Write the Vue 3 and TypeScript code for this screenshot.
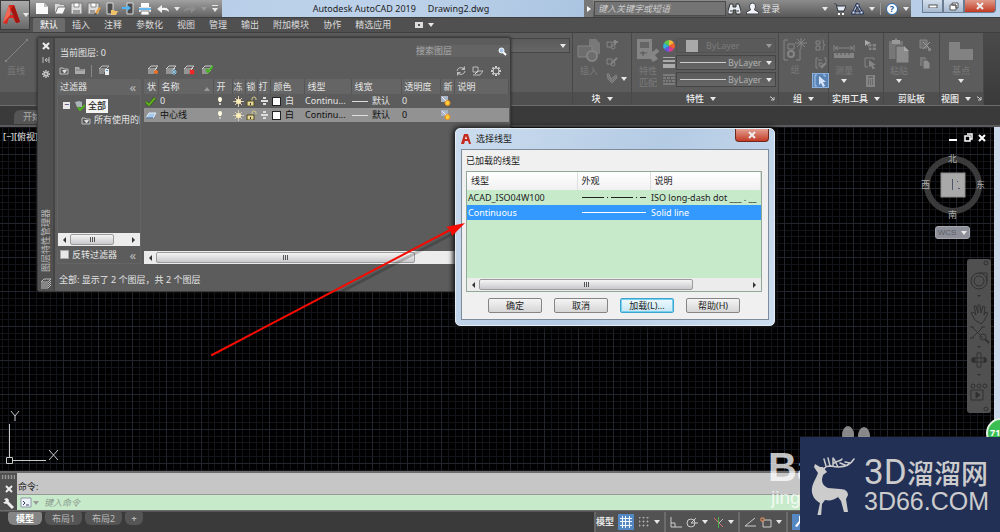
<script setup lang="ts">
import { h, ref } from 'vue'

type Shape = [d: string, fill?: string, stroke?: string, width?: number]
interface GlyphDef { w: number; h: number; shapes: Shape[] }

const ink = '#e8e8e8'
const dim = '#858585'

const glyphs: Record<string, GlyphDef> = {
  new: { w: 14, h: 13, shapes: [['M1 1h8l4 4v7H1z', '#fafafa'], ['M9 1v4h4z', '#bdbdbd']] },
  open: { w: 14, h: 13, shapes: [['M2 12V2h4l1 1h4v2H5z', '#d8d8d8'], ['M5 5h8l-3 7H2z', '#f7f7f7', '#777', 1]] },
  save: { w: 13, h: 13, shapes: [['M1 1h11v11H1z', '#dcdcdc', '#777', 1], ['M4 1h5v4H4z', '#fff', '#888', 1], ['M3 8h7v4H3z', '#9a9a9a']] },
  saveAs: { w: 14, h: 13, shapes: [['M1 1h11v11H1z', '#dcdcdc', '#777', 1], ['M4 1h5v4H4z', '#fff', '#888', 1], ['M3 8h5v4H3z', '#9a9a9a'], ['M8 11l4-6 2 1-4 6z', '#e8a040'], ['M8 11l-1 2 3-1z', '#444']] },
  phoneOpen: { w: 13, h: 13, shapes: [['M2 1h6v11H2z', '#4d4d4d', '#d8d8d8', 1], ['M6 8h3l1 1h3l-2 4H6z', '#f0c36a']] },
  phoneSave: { w: 13, h: 13, shapes: [['M5 1h6v11H5z', '#4d4d4d', '#d8d8d8', 1], ['M0 5h5V3l4 3-4 3V7H0z', '#53b4f4']] },
  print: { w: 14, h: 13, shapes: [['M3 1h8v4H3z', '#fff'], ['M1 5h12v5H1z', '#e3e3e3'], ['M1 6h12v2H1z', '#68b7ee'], ['M3 9h8v4H3z', '#fff', '#888', 1]] },
  undo: { w: 14, h: 10, shapes: [['M1 5l5-4v3c5-1 7 1 7 4-2-2-4-2-7-2v3z', '#f2f2f2']] },
  redo: { w: 14, h: 10, shapes: [['M13 5L8 1v3C3 3 1 5 1 8c2-2 4-2 7-2v3z', '#8d8d8d']] },
  caret: { w: 6, h: 4, shapes: [['M0 0h6L3 4z', ink]] },
  caretDim: { w: 6, h: 4, shapes: [['M0 0h6L3 4z', '#999']] },
  menuCaret: { w: 8, h: 7, shapes: [['M1 0h6v1H1zM1 3h6L4 7z', ink]] },
  play: { w: 4, h: 6, shapes: [['M0 0l4 3-4 3z', '#fff']] },
  binoculars: { w: 13, h: 13, shapes: [['M2 2h3v3h3V2h3l2 7v3H8V8H5v4H0V9z', '#e6ebf2', '#333', 1], ['M2 9h2M9 9h2', 'none', '#333', 1]] },
  person: { w: 13, h: 13, shapes: [['M6.500 1a3 3 0 013 3c0 2-1 3-1 4l4 2v2H.5v-2l4-2c0-1-1-2-1-4a3 3 0 013-3z', '#f4f6fa', '#40464f', 1]] },
  cart: { w: 13, h: 12, shapes: [['M1 1h2l2 7h6l2-5H4', '#e6ebf2', '#2c3440', 1], ['M5 10h2v2H5zM9 10h2v2H9z', '#fff']] },
  triangle: { w: 13, h: 12, shapes: [['M6 2L2 10h9z', 'none', '#2c3a5c', 3], ['M6 2L2 10h9z', 'none', '#e6ecf6', 1], ['M5 1h3v3H5zM1 8h3v3H1zM9 8h3v3H9z', '#e6ecf6', '#2c3a5c', 1]] },
  ribbonBox: { w: 10, h: 6, shapes: [['M1 0h8v6H1z', '#ddd'], ['M4 2h2v2H4z', '#555']] },
  close: { w: 8, h: 8, shapes: [['M1 1l6 6M7 1L1 7', 'none', '#eee', 2]] },
  pin: { w: 8, h: 8, shapes: [['M1 1v6M7 1v6M3 4h4M5 2L3 4l2 2', 'none', '#bbb', 1]] },
  gear: { w: 12, h: 12, shapes: [['M6 1v10M1 6h10M2.500 2.500l7 7M9.500 2.500l-7 7', 'none', '#ccc', 2], ['M3 6a3 3 0 106 0 3 3 0 10-6 0z', '#5c5c5c', '#ccc', 1]] },
  folderFilter: { w: 10, h: 9, shapes: [['M1 2h3l1 1h4v5H1z', 'none', '#bbb', 1], ['M3 4h5L6 7H5z', '#ddd']] },
  folder: { w: 10, h: 9, shapes: [['M0 1h4l1 2h5v5H0z', '#aaa'], ['M1 4h8', 'none', '#777', 1]] },
  states: { w: 12, h: 11, shapes: [['M4 1h7L8 4H1zM1 6h6M1 8h5', 'none', '#bbb', 1], ['M7 4h4v6H7z', '#eee'], ['M8 5h2v1H8z', '#3b8fd0']] },
  layerNew: { w: 12, h: 11, shapes: [['M4 1h7L8 4H1zM1 6h6l3-3M1 8h6l3-3', 'none', '#ccc', 1], ['M7 7a2 2 0 104 0 2 2 0 10-4 0z', '#f27022']] },
  layerFreeze: { w: 12, h: 11, shapes: [['M4 1h7L8 4H1zM1 6h6l3-3M1 8h6', 'none', '#ccc', 1], ['M9 4v6M6 7h6M7 5l4 4M11 5L7 9', 'none', '#8fc6e4', 1]] },
  layerDelete: { w: 12, h: 11, shapes: [['M4 1h7L8 4H1zM1 6h6l3-3M1 8h6', 'none', '#ccc', 1], ['M7 5l4 4M11 5L7 9', 'none', '#f22', 2]] },
  layerSet: { w: 12, h: 11, shapes: [['M4 1h7L8 4H1zM1 6h5M1 8h6l3-3', 'none', '#ccc', 1], ['M5 4l2 3 5-6', 'none', '#43b51c', 2]] },
  refresh: { w: 10, h: 10, shapes: [['M8 3a4 4 0 00-7 2M2 7a4 4 0 007-2', 'none', '#bbb', 1], ['M9 0v4H5zM1 10V6h4z', '#bbb']] },
  toggleLayer: { w: 12, h: 10, shapes: [['M1 1h5v5H1zM1 9h7l3-4H6', 'none', '#bbb', 1], ['M3 8l3-3', 'none', '#ddd', 1]] },
  magnifier: { w: 9, h: 9, shapes: [['M5 5l3 3', 'none', '#fff', 2], ['M1 3.500a2.500 2.500 0 105 0 2.500 2.500 0 10-5 0z', '#a9c9ea', '#fff', 1]] },
  tick: { w: 11, h: 9, shapes: [['M1 5l3 3 6-7', 'none', '#234d10', 3], ['M1 5l3 3 6-7', 'none', '#62b021', 2]] },
  plane: { w: 12, h: 7, shapes: [['M4 1h7L8 6H1z', '#a6c8ea', '#e3eefa', 1], ['M1 6h7', 'none', '#2b4a78', 1]] },
  bulb: { w: 6, h: 10, shapes: [['M1 3a2 2 0 114 0c0 2-1 2-1 3H2c0-1-1-1-1-3z', '#fffbe0'], ['M2 7h2v2H2z', '#c4c4c4']] },
  sun: { w: 11, h: 11, shapes: [['M5.500 0v11M0 5.500h11M2 2l7 7M9 2L2 9', 'none', '#d9ccb0', 1], ['M3 5.500a2.500 2.500 0 105 0 2.500 2.500 0 10-5 0z', '#fff0b8']] },
  lock: { w: 11, h: 10, shapes: [['M6 5V3a2 2 0 014 0v1', 'none', '#d6c98a', 1], ['M1 5h7v5H1z', '#e4d694', '#524920', 1], ['M4 7h1v2H4z', '#333']] },
  plot: { w: 7, h: 8, shapes: [['M2 0h3v2H2zM0 3h7v2H0zM2 6h3v2H2z', '#ddd']] },
  vpNew: { w: 10, h: 10, shapes: [['M0 0h7v6H0z', '#a9b4c4'], ['M1 1l4 4', 'none', '#eef', 1], ['M4 7a2.500 2.500 0 105 0 2.500 2.500 0 10-5 0z', '#ffd23c', '#f08a1c', 1]] },
  line: { w: 24, h: 25, shapes: [['M2 23L23 2', 'none', dim, 1], ['M1 22h2v2H1zM22 1h2v2h-2z', dim]] },
  insert: { w: 24, h: 25, shapes: [['M12 1h7l4 4v11H12z', '#797979'], ['M1 8h14v11H1z', '#6d6d6d', dim, 1], ['M10 18a5 5 0 1010 0 5 5 0 10-10 0z', '#6d6d6d', dim, 2]] },
  blockA: { w: 12, h: 11, shapes: [['M1 3h5v5H1zM5 8a2 2 0 104 0 2 2 0 10-4 0z', 'none', dim, 1], ['M9 1v5M7 3h5', 'none', dim, 2]] },
  blockB: { w: 12, h: 11, shapes: [['M1 3h5v5H1zM5 8a2 2 0 104 0 2 2 0 10-4 0z', 'none', dim, 1], ['M6 7l5-5', 'none', dim, 2]] },
  blockC: { w: 12, h: 11, shapes: [['M1 1l2 0 2 5 5-4 1 3-5 5-4-4z', '#6d6d6d', dim, 1], ['M2 3l4 5 4-4', 'none', dim, 1]] },
  matchProp: { w: 24, h: 25, shapes: [['M1 1h15v20H1z', '#858585'], ['M4 4h9v6H4z', '#656565'], ['M4 15h9M7 13v5', 'none', '#555', 1], ['M10 15l6-2 6 8-5 3z', dim], ['M17 16l5-4', 'none', dim, 4]] },
  lineWeights: { w: 12, h: 12, shapes: [['M0 0h12v1H0zM0 3h12v2H0zM0 7h12v4H0z', '#aaa']] },
  lineTypes: { w: 12, h: 11, shapes: [['M0 1h12', 'none', '#999', 1], ['M0 4h3m1 0h3m1 0h4M0 7h2m1 0h2m1 0h2m1 0h3M0 10h12', 'none', '#999', 1]] },
  group: { w: 24, h: 24, shapes: [['M5 2H1v20h4M13 22h4V11M5 6h6v5H5z', 'none', dim, 1], ['M5 16a3 3 0 106 0 3 3 0 10-6 0z', 'none', dim, 2], ['M18 0v11M12 5h12M14 1l8 8M22 1l-8 8', 'none', dim, 1]] },
  ungroup: { w: 12, h: 12, shapes: [['M1 2h4v3H1zM1 7h4v4H1zM7 1c3 0 0 5 3 5-3 0 0 5-3 5', 'none', dim, 1]] },
  groupEdit: { w: 12, h: 12, shapes: [['M3 1H1v10h2M9 1h2v4M3 3h4M4 6h3v3H4z', 'none', dim, 1], ['M6 11l5-5', 'none', dim, 2]] },
  groupPick: { w: 13, h: 13, shapes: [['M3 1H1v11h2M9 1h2v2', 'none', '#a8c8ee', 1], ['M5 2l7 6H9l2 4-2 1-2-4-2 2z', '#d4e4f6']] },
  measure: { w: 22, h: 14, shapes: [['M1 1v6M21 1v6M2 4h18M5 2L2 4l3 2M17 2l3 2-3 2', 'none', dim, 1], ['M1 9h20v5H1z', dim], ['M4 9v2M8 9v2M12 9v2M16 9v2', 'none', '#555', 1]] },
  quickSel: { w: 13, h: 12, shapes: [['M5 5h7v6H5z', dim], ['M1 1l6 3-3 1 1 4-2-4-2 2z', '#aaa'], ['M8 5v6M5 8h7', 'none', '#555', 1]] },
  selectAll: { w: 13, h: 12, shapes: [['M1 1h9M1 1v9M10 1v2M1 10h3', 'none', dim, 1], ['M5 3l7 5H9l2 4-2 1-2-4-2 1z', dim]] },
  calc: { w: 9, h: 12, shapes: [['M0 0h9v12H0z', dim], ['M2 2h5M2 5h1m1 0h1m1 0h1M2 7h1m1 0h1m1 0h1M2 9h1m1 0h1m1 0h1', 'none', '#505050', 1]] },
  paste: { w: 22, h: 25, shapes: [['M1 3h14v18H1z', '#777'], ['M4 2h3l1-2 1 2h3v4H4z', '#999'], ['M8 8h8l5 5v12H8z', '#8b8b8b', '#5d5d5d', 1], ['M16 8v5h5z', '#aaa']] },
  cut: { w: 12, h: 12, shapes: [['M1 1h7v8H1z', '#707070', dim, 1], ['M4 3l7 7M11 3l-7 7', 'none', '#999', 1], ['M9 9h3v3H9z', dim]] },
  copy: { w: 10, h: 12, shapes: [['M0 0h5l2 2v7H0z', '#777'], ['M3 3h4l3 3v6H3z', '#8e8e8e', '#5d5d5d', 1]] },
  base: { w: 24, h: 18, shapes: [['M0 0h11v7h13v11H0z', '#828282']] },
  launcher: { w: 5, h: 5, shapes: [['M0 1h1M1 1l3 3M4 1v3H1', 'none', '#ccc', 1]] },
  layers: { w: 12, h: 11, shapes: [['M4 1h7L8 4H1zM1 6h7l3-3M1 8h7l3-3M1 10h7l3-3', 'none', '#bbb', 1]] },
  wrench: { w: 11, h: 11, shapes: [['M3 3l7 7', 'none', '#eee', 3], ['M1 1l3-1 2 2-1 3-3 1-2-2 2 0 1-1z', '#eee']] },
  prompt: { w: 12, h: 11, shapes: [['M1 1h10v9H1z', '#eef2fa', '#8e98a8', 1], ['M3 4l2 2-2 2M6 8h3', 'none', '#39455a', 1]] },
  grid: { w: 12, h: 12, shapes: [['M2 0h1v12H2zM5 0h1v12H5zM9 0h1v12H9zM0 2h12v1H0zM0 5h12v1H0zM0 9h12v1H0z', '#f0f4fa']] },
  snap: { w: 10, h: 10, shapes: [['M0 0h1v1H0zM4 0h1v1H4zM8 0h1v1H8zM0 4h1v1H0zM4 4h1v1H4zM8 4h1v1H8zM0 8h1v1H0zM4 8h1v1H4zM8 8h1v1H8z', '#ddd', '#aaa', 1]] },
  ortho: { w: 12, h: 11, shapes: [['M1 0v10h11M1 6h4v4', 'none', '#ccc', 1]] },
  polar: { w: 12, h: 11, shapes: [['M1 6a4 4 0 108 0 4 4 0 10-8 0zM5 6h7M5 6l5-5', 'none', '#ccc', 1]] },
  iso: { w: 11, h: 11, shapes: [['M1 1l9 9', 'none', '#e07070', 1], ['M5 0h1v11H5z', '#4cb04c'], ['M6 6l4-4', 'none', '#bbb', 1]] },
  angle: { w: 12, h: 10, shapes: [['M11 1L1 9h11', 'none', '#ccc', 1]] },
  osnap: { w: 12, h: 11, shapes: [['M3 3h8v7H3z', 'none', '#ccc', 1], ['M1 1h3v3H1z', '#555', '#e8905a', 1]] },
  anno: { w: 12, h: 12, shapes: [['M5 0h2v5l4 5-2 1-3-4-3 4-2-1 4-5z', '#fff']] },
}

const Glyph = (p: { name: string }) => {
  const g = glyphs[p.name]
  return h(
    'svg',
    { width: g.w, height: g.h, viewBox: `0 0 ${g.w} ${g.h}`, 'aria-hidden': 'true', class: 'glyph' },
    g.shapes.map(([d, fill, stroke, sw]) =>
      h('path', { d, fill: fill ?? 'none', stroke: stroke ?? 'none', 'stroke-width': sw ?? 1 }),
    ),
  )
}

const quick = ['new', 'open', 'save', 'saveAs', 'phoneOpen', 'phoneSave', 'print']
const tabs = ['默认', '插入', '注释', '参数化', '视图', '管理', '输出', '附加模块', '协作', '精选应用']
const layerCols = ['状', '名称', '开', '冻', '锁', '打', '颜色', '线型', '线宽', '透明度', '新', '说明']
const layers = [
  { icon: 'tick', name: '0', selected: false },
  { icon: 'plane', name: '中心线', selected: true },
]
const linetypes = [
  { name: 'ACAD_ISO04W100', dash: '22 3 1 3', desc: 'ISO long-dash dot ___ . __' },
  { name: 'Continuous', dash: 'none', desc: 'Solid line' },
]
const selected = ref(1)
const invert = ref(false)
const layerQuery = ref('')
const command = ref('')
const helpQuery = ref('')
const layouts = ['模型', '布局1', '布局2']

/* fifteen minor cells make three major cells per 103px tile */
const minor = Array.from({ length: 15 }, (_, i) => Math.round((i * 103) / 15) + 0.5)
const major = minor.filter((_, i) => i % 5 === 0)
const toPath = (a: number[]) => a.map((n) => `M${n} 0V103M0 ${n}H103`).join('')
const minorPath = toPath(minor)
const majorPath = toPath(major)
</script>

<template>
  <div class="app">
    <header class="titlebar">
      <div class="quick">
        <button v-for="q in quick" :key="q" :aria-label="q"><Glyph :name="q" /></button>
        <button aria-label="undo"><Glyph name="undo" /></button>
        <Glyph name="caret" />
        <button aria-label="redo"><Glyph name="redo" /></button>
        <Glyph name="caretDim" />
        <button aria-label="customize"><Glyph name="menuCaret" /></button>
      </div>
      <h1 class="caption"><span>Autodesk AutoCAD 2019</span><span>Drawing2.dwg</span></h1>
      <div class="info">
        <button class="expand" aria-label="expand"><Glyph name="play" /></button>
        <input v-model="helpQuery" class="help-search" aria-label="搜索" placeholder="键入关键字或短语">
        <button aria-label="find"><Glyph name="binoculars" /></button>
        <button class="login"><Glyph name="person" />登录</button>
        <span class="grow"></span>
        <Glyph name="caret" />
        <button aria-label="store"><Glyph name="cart" /></button>
        <button aria-label="apps"><Glyph name="triangle" /></button>
        <Glyph name="caret" />
        <span class="rule"></span>
        <button class="help" aria-label="help">?</button>
        <Glyph name="caret" />
      </div>
      <div class="winctl">
        <button aria-label="minimize"><svg width="10" height="4"><rect x="1" y="1" width="8" height="3" fill="#fff" stroke="#555" /></svg></button>
        <button aria-label="restore"><svg width="10" height="9"><path d="M3 1h6v5H7V3H3zM1 3h6v5H1z" fill="#fff" stroke="#555" /></svg></button>
        <button class="x" aria-label="close"><Glyph name="close" /></button>
      </div>
    </header>

    <button class="appbtn" aria-label="application menu">
      <svg width="19" height="22" viewBox="0 0 19 22"><path d="M1 19L7 1h5l6 17-4 1-3-5H7l-2 6z" fill="#d42b1e" /><path d="M7 1l2 9-8 9z" fill="#f26a55" /><path d="M12 1l6 17-4 1L9 5z" fill="#a3150f" /><path d="M8 11l1-4 2 4z" fill="#777" /></svg>
      <Glyph name="caret" />
    </button>

    <nav class="tabs">
      <a v-for="(t, i) in tabs" :key="t" href="#" :class="{ on: i === 0 }">{{ t }}</a>
      <Glyph name="ribbonBox" /><Glyph name="caret" />
    </nav>

    <section class="ribbon">
      <div class="panel first">
        <div class="tools"><div class="big"><Glyph name="line" /><span>直线</span></div><span class="grow"></span><div class="combo plain"><span class="grow"></span><Glyph name="caret" /></div></div>
        <div class="ptitle"></div>
      </div>
      <div class="panel p-block">
        <div class="tools">
          <div class="big"><Glyph name="insert" /><span>插入</span></div>
          <div class="stack"><Glyph name="blockA" /><Glyph name="blockB" /><span class="with-caret"><Glyph name="blockC" /><Glyph name="caret" /></span></div>
        </div>
        <div class="ptitle">块 <Glyph name="caret" /></div>
      </div>
      <div class="panel p-prop">
        <div class="tools">
          <div class="big"><Glyph name="matchProp" /><span>特性<br>匹配</span></div>
          <div class="props">
            <label class="prow">
              <svg width="12" height="12" viewBox="-6 -6 12 12"><path d="M0 0V-6A6 6 0 015-3z" fill="#f6b63c" /><path d="M0 0L5-3A6 6 0 015 3z" fill="#f4602c" /><path d="M0 0L5 3A6 6 0 010 6z" fill="#d63b8f" /><path d="M0 0V6A6 6 0 01-5 3z" fill="#6b54e0" /><path d="M0 0L-5 3A6 6 0 01-5-3z" fill="#2fb3d8" /><path d="M0 0L-5-3A6 6 0 010-6z" fill="#5fc850" /></svg>
              <span class="combo off"><i class="swatch"></i><select aria-label="颜色" disabled><option>ByLayer</option></select><Glyph name="caretDim" /></span>
            </label>
            <label class="prow"><Glyph name="lineWeights" /><span class="combo"><i class="sample"></i><select aria-label="线宽"><option>ByLayer</option></select><Glyph name="caret" /></span></label>
            <label class="prow"><Glyph name="lineTypes" /><span class="combo"><i class="sample"></i><select aria-label="线型"><option>ByLayer</option></select><Glyph name="caret" /></span></label>
          </div>
        </div>
        <div class="ptitle">特性 <Glyph name="caret" /><Glyph name="launcher" class="launch" /></div>
      </div>
      <div class="panel p-group">
        <div class="tools">
          <div class="big"><Glyph name="group" /><span>组</span></div>
          <div class="stack"><Glyph name="ungroup" /><Glyph name="groupEdit" /><span class="hot"><Glyph name="groupPick" /></span></div>
        </div>
        <div class="ptitle">组 <Glyph name="caret" /></div>
      </div>
      <div class="panel p-util">
        <div class="tools">
          <div class="big low"><Glyph name="measure" /><span>测量</span><Glyph name="caret" /></div>
          <div class="stack"><Glyph name="quickSel" /><Glyph name="selectAll" /><Glyph name="calc" /></div>
        </div>
        <div class="ptitle">实用工具 <Glyph name="caret" /></div>
      </div>
      <div class="panel p-clip">
        <div class="tools">
          <div class="big"><Glyph name="paste" /><span>粘贴</span><Glyph name="caret" /></div>
          <div class="stack"><Glyph name="cut" /><Glyph name="copy" /></div>
        </div>
        <div class="ptitle">剪贴板</div>
      </div>
      <div class="panel p-view">
        <div class="tools"><div class="big basept"><Glyph name="base" /><span>基点</span><Glyph name="caret" /></div></div>
        <div class="ptitle">视图 <Glyph name="caret" /><Glyph name="launcher" /></div>
      </div>
      <div class="tail"></div>
    </section>

    <div class="filetabs"><a href="#">开始</a></div>

    <main class="canvas">
      <svg class="gridlines" width="100%" height="100%">
        <defs>
          <pattern id="cells" x="29" y="27" width="103" height="103" patternUnits="userSpaceOnUse">
            <path :d="minorPath" stroke="#131419" />
            <path :d="majorPath" stroke="#22242e" />
          </pattern>
        </defs>
        <rect width="100%" height="100%" fill="url(#cells)" />
      </svg>
      <span class="viewlabel">[−][俯视]</span>
      <div class="docctl">
        <svg width="38" height="10"><path d="M0 6h8v2H0z" fill="#fff" /><path d="M18 1h5v5h-2M16 3h5v5h-5z" fill="none" stroke="#fff" stroke-width="1.500" /><path d="M30 2l6 6M36 2l-6 6" stroke="#fff" stroke-width="2" /></svg>
      </div>
      <div class="cube">
        <svg width="64" height="70" viewBox="0 0 64 70">
          <circle cx="32" cy="34" r="26" fill="none" stroke="#3a3a3a" stroke-width="6" />
          <rect x="20" y="22" width="24" height="24" fill="#a9a9a9" stroke="#8c8c8c" />
          <path d="M31 28h1v11h-1zM36 30h1v1h-1zM37 37h2v1h-2z" fill="#4e5566" />
        </svg>
        <span class="n">北</span><span class="s">南</span><span class="w">西</span><span class="e">东</span>
      </div>
      <button class="wcs">WCS <Glyph name="caret" /></button>
      <div class="navbar">
        <svg width="24" height="154" viewBox="0 0 24 154" fill="none" stroke="#303030">
          <circle cx="19" cy="4" r="2" /><circle cx="19" cy="150" r="2" />
          <circle cx="12" cy="22" r="8" /><circle cx="12" cy="22" r="5" /><path d="M12 14h8v8" />
          <path d="M10 36h4l-2 2zM10 87h4l-2 2zM10 115h4l-2 2z" fill="#303030" stroke="none" />
          <path d="M8 61l-4-7 2-1 3 3-2-9 2 0 2 7 0-8h2l1 8 2-7 2 1-1 8 2-3 2 1-4 8-3 3z" />
          <path d="M5 68l11 11M16 68L5 79M3 68h4M14 68h4M3 79h4" /><circle cx="16" cy="78" r="3" /><path d="M18 80l4 4" stroke-width="2" />
          <path d="M10 94h4v14h-4zM5 99h14v4H5z" /><path d="M4 101l4-3v6zM20 101l-3-3v6z" fill="#303030" />
          <circle cx="6" cy="127" r="2" /><circle cx="12" cy="127" r="2" /><circle cx="18" cy="127" r="2" /><path d="M4 131h12v10H4z" /><path d="M9 133l4 3-4 3z" fill="#303030" />
        </svg>
      </div>
      <div class="badge">71</div>
      <svg class="ucs" width="64" height="56" viewBox="0 0 64 56" fill="none" stroke="#c8c8c8">
        <path d="M6.500 15v33M10 51.500h33M3.500 48.500h6v6h-6zM8 2l4 5 4-5M12 7v5M46 41l9 10M55 41l-9 10" />
      </svg>
    </main>

    <section class="cmd">
      <div class="grip"><i></i><Glyph name="close" /><Glyph name="wrench" /></div>
      <div class="lines">
        <div class="history">命令:</div>
        <label class="entry"><Glyph name="prompt" /><Glyph name="caretDim" /><input v-model="command" aria-label="命令" placeholder="键入命令"></label>
      </div>
    </section>

    <footer class="status">
      <div class="layouts">
        <button v-for="(l, i) in layouts" :key="l" :class="{ on: i === 0 }">{{ l }}</button>
        <button class="add">+</button>
      </div>
      <div class="toggles">
        <button class="txt">模型</button>
        <button class="lit" aria-label="grid"><Glyph name="grid" /></button>
        <button aria-label="snap"><Glyph name="snap" /></button><Glyph name="caret" />
        <span class="sep"></span>
        <button aria-label="ortho"><Glyph name="ortho" /></button>
        <button aria-label="polar"><Glyph name="polar" /></button><Glyph name="caret" />
        <button aria-label="isodraft"><Glyph name="iso" /></button><Glyph name="caret" />
        <span class="sep"></span>
        <button aria-label="tracking"><Glyph name="angle" /></button>
        <button aria-label="osnap"><Glyph name="osnap" /></button><Glyph name="caret" />
        <span class="sep"></span>
        <button class="lit" aria-label="annotation"><Glyph name="anno" /></button>
      </div>
    </footer>

    <aside class="palette">
      <div class="spine">
        <Glyph name="close" /><Glyph name="pin" />
        <svg width="8" height="8" viewBox="0 0 12 12"><path d="M6 0v12M0 6h12M2 2l8 8M10 2l-8 8" stroke="#ccc" stroke-width="2" /><circle cx="6" cy="6" r="2" fill="#4f4f4f" stroke="#ccc" /></svg>
        <span class="grow"></span>
        <span class="vtext">图层特性管理器</span>
        <Glyph name="layers" />
      </div>
      <div class="pbody">
        <div class="current">
          <span>当前图层: 0</span>
          <label class="lsearch"><input v-model="layerQuery" aria-label="搜索图层" placeholder="搜索图层"><Glyph name="magnifier" /></label>
        </div>
        <div class="ltools">
          <div class="lt-left"><Glyph name="folderFilter" /><Glyph name="folder" /><i></i><Glyph name="states" /></div>
          <div class="lt-mid"><Glyph name="layerNew" /><Glyph name="layerFreeze" /><Glyph name="layerDelete" /><Glyph name="layerSet" /></div>
          <div class="lt-right"><Glyph name="refresh" /><Glyph name="toggleLayer" /><Glyph name="gear" /></div>
        </div>
        <div class="cols">
          <div class="filters">
            <div class="fhead"><span>过滤器</span><span class="chev">«</span></div>
            <div class="tree">
              <div class="node"><i class="minus">−</i><svg width="11" height="11"><path d="M1 2l4-1 3 1v5H3z" fill="#aab2ba" /><path d="M4 7l2 3 5-5" fill="none" stroke="#4fb21e" stroke-width="2" /></svg><b>全部</b></div>
              <div class="node child"><svg width="8" height="8"><path d="M1 0v4h7" fill="none" stroke="#3a3a3a" /></svg><Glyph name="folderFilter" /><span>所有使用的图层</span></div>
            </div>
            <div class="sbar short"><svg width="4" height="6"><path d="M4 0v6L1 3z" fill="#333" /></svg><i class="thumb"></i><span class="grow"></span><svg width="4" height="6"><path d="M0 0v6l3-3z" fill="#333" /></svg></div>
            <div class="inv"><input id="inv" v-model="invert" type="checkbox"><label for="inv">反转过滤器</label><span class="chev">«</span></div>
          </div>
          <div class="layerlist">
            <table>
              <colgroup><col class="c14"><col class="c55"><col class="c19"><col class="c13"><col class="c12"><col class="c13"><col class="c34"><col class="c47"><col class="c50"><col class="c39"><col class="c14"><col></colgroup>
              <thead><tr><th v-for="c in layerCols" :key="c">{{ c }}<svg v-if="c === '名称'" class="sort" width="6" height="4"><path d="M0 4h6L3 0z" fill="#999" /></svg></th></tr></thead>
              <tbody>
                <tr v-for="l in layers" :key="l.name" :class="{ sel: l.selected }">
                  <td><Glyph :name="l.icon" /></td><td class="lname">{{ l.name }}</td>
                  <td class="mid"><Glyph name="bulb" /></td><td><Glyph name="sun" /></td><td><Glyph name="lock" /></td><td class="mid"><Glyph name="plot" /></td>
                  <td><span class="cell"><i class="white"></i>白</span></td><td>Continu...</td>
                  <td><span class="cell"><i class="dashline"></i>默认</span></td><td>0</td><td><Glyph name="vpNew" /></td><td></td>
                </tr>
              </tbody>
            </table>
            <div class="void"></div>
            <div class="sbar long"><svg width="4" height="6"><path d="M4 0v6L1 3z" fill="#333" /></svg><i class="thumb"></i></div>
          </div>
        </div>
        <div class="pstatus">全部: 显示了 2 个图层，共 2 个图层</div>
      </div>
    </aside>

    <section class="dialog" role="dialog" aria-label="选择线型">
      <div class="dhead">
        <svg width="10" height="11" viewBox="0 0 10 11"><path d="M0 10L3 0h4l3 10H8L7 7H4l-1 3z" fill="#c4291f" /><path d="M4 5l1-3 1 3z" fill="#fff" /></svg>
        <h2>选择线型</h2>
        <button aria-label="关闭"><Glyph name="close" /></button>
      </div>
      <div class="dbody">
        <p>已加载的线型</p>
        <div class="list">
          <table>
            <colgroup><col class="l1"><col class="l2"><col></colgroup>
            <thead><tr><th>线型</th><th>外观</th><th>说明</th></tr></thead>
            <tbody>
              <tr v-for="(l, i) in linetypes" :key="l.name" :class="{ sel: i === selected }" @click="selected = i">
                <td>{{ l.name }}</td>
                <td><svg width="66" height="3"><path d="M1 1.500h64" stroke="currentColor" :stroke-dasharray="l.dash" /></svg></td>
                <td>{{ l.desc }}</td>
              </tr>
            </tbody>
          </table>
          <div class="void"></div>
          <div class="sbar dlg"><svg width="4" height="6"><path d="M4 0v6L1 3z" fill="#333" /></svg><i class="thumb"></i><span class="grow"></span><svg width="4" height="6"><path d="M0 0v6l3-3z" fill="#333" /></svg></div>
        </div>
        <div class="dbtns"><button>确定</button><button>取消</button><button class="def">加载(L)...</button><button>帮助(H)</button></div>
      </div>
    </section>

    <svg class="arrow" width="280" height="150" viewBox="0 0 280 150">
      <path d="M14 144L256 18" stroke="#000" stroke-opacity=".2" stroke-width="3" />
      <path d="M12 141L252 15" stroke="#f50b00" stroke-width="2" stroke-linecap="round" />
      <path d="M265 9l-19 4 4 3 2 6z" fill="#f50b00" />
    </svg>

    <div class="mark"><svg width="30" height="26"><ellipse cx="7" cy="13" rx="6" ry="9" fill="#b5b5b5" /><ellipse cx="23" cy="14" rx="6" ry="9" fill="#b5b5b5" /></svg><b>Ba</b><span>jing</span></div>

    <div class="brand">
      <svg width="48" height="60" viewBox="0 0 48 60">
        <path d="M5 9l5 3 3 0 4 5-4 3-1 4c0 5 2 7 6 9l12 1c6 0 8 3 8 6l-2 4 2 13h-4l-3-11-3-4c-4 3-8 4-13 3l-3 4-1 13H7l3-14c-5-3-9-8-8-15 1-6 4-9 6-15l-4-6z" fill="#ccc" />
        <path d="M14 14c1-3 4-3 7-3 9 2 18 1 23-7M16 11l-2-7M20 11l-2-8M23 11l0-8M28 12l-4-8M23 9c4-4 7-2 9-5M35 10l-5-2M40 8l-5-1" fill="none" stroke="#ccc" stroke-width="1.500" stroke-linecap="round" />
      </svg>
      <div class="words"><div class="w1"><span>3D</span><b>溜溜网</b></div><div class="w2">3D66.COM</div></div>
    </div>
  </div>
</template>

<style>
body { margin: 0; background: #3a3a3a; }
.glyph { display: block; flex: none; }
</style>

<style scoped>
* { box-sizing: border-box; }
.app { position: relative; min-height: 100vh; display: flex; flex-direction: column; overflow: hidden; font: 9px/12px "Noto Sans", "Noto Sans CJK SC", sans-serif; color: #e4e4e4; background: #3a3a3a; }
button, input, select { font: inherit; color: inherit; margin: 0; padding: 0; border: 0; background: none; }
button { display: flex; align-items: center; justify-content: center; white-space: nowrap; }
i { font-style: normal; }
a { color: inherit; text-decoration: none; }
.grow { flex: 1; }

.titlebar { display: flex; height: 17px; background: linear-gradient(100deg, #b4cbe6, #bdd2ea 40%, #a9c3e0 60%, #bcd1ea); }
.quick { width: 222px; padding: 0 3px 0 35px; display: flex; align-items: center; justify-content: space-between; background: linear-gradient(#a0a0a0, #626262); }
.caption { flex: 1; margin: 0; display: flex; justify-content: center; gap: 12px; padding-right: 4px; color: #222; font: inherit; line-height: 17px; }
.info { width: 327px; display: flex; align-items: center; gap: 5px; padding-right: 2px; background: linear-gradient(#8c8c8c, #585858); }
.expand { width: 9px; height: 17px; background: #777; }
.help-search { width: 132px; height: 15px; margin: 0 -3px 0 -4px; padding-left: 3px; background: #747474; border: 1px solid #4c4c4c; font-style: italic; }
.help-search::placeholder { color: #ccc; opacity: 1; }
.login { gap: 3px; }
.rule { width: 1px; height: 12px; background: #999; }
.help { width: 12px; height: 12px; border-radius: 6px; background: #fff; border: 1px solid #2766a8; color: #1c5a9c; font-weight: bold; }
.winctl { width: 89px; display: flex; padding: 0 4px 0 11px; height: 13px; }
.winctl button { width: 21px; height: 13px; border: 1px solid #6a7c92; border-top: 0; background: linear-gradient(#d3deec, #a8b9cf); }
.winctl .x { flex: 1; background: linear-gradient(#e09a8a, #c23a22); border-radius: 0 0 4px 0; }

.appbtn { position: absolute; left: 0; top: 0; width: 30px; height: 30px; gap: 2px; background: linear-gradient(#aaa, #686868); border: 1px solid #3c3c3c; }

.tabs { display: flex; align-items: center; height: 16px; padding-left: 33px; background: #505050; border-bottom: 1px solid #3f3f3f; border-top: 1px solid #3f3f3f; }
.tabs a { padding: 0 7px; line-height: 14px; color: #dcdcdc; }
.tabs a.on { background: #6b6b6b; color: #fff; border-radius: 2px 2px 0 0; }
.tabs svg { margin-left: 4px; }
.tabs a + svg { margin-left: 16px; }

.ribbon { display: flex; height: 73px; background: #5c5c5c; border-bottom: 1px solid #6c6c6c; }
.panel { display: flex; flex-direction: column; border-right: 1px solid #484848; }
.first { flex: 1; }
.p-block { width: 59px; }
.p-prop { width: 147px; }
.p-group { width: 50px; }
.p-util { width: 55px; }
.p-clip { width: 56px; }
.p-view { width: 44px; }
.tail { width: 16px; background: linear-gradient(#4a4a4a, #3a3a3a); }
.tools { flex: 1; display: flex; padding: 5px 4px 0; gap: 3px; color: #7a7a7a; }
.first .tools { padding-right: 2px; }
.ptitle { height: 13px; display: flex; align-items: center; justify-content: center; gap: 6px; background: #4f4f4f; color: #eee; font-weight: 500; }
.p-prop .ptitle { padding-left: 54px; }
.launch { margin-left: auto; margin-right: 3px; }
.big { display: flex; flex-direction: column; align-items: center; gap: 2px; }
.big span { white-space: nowrap; }
.low { padding-top: 6px; }
.low > span { margin-top: 5px; }
.basept { padding: 4px 4px 0 5px; }
.basept > span { margin-top: 3px; }
.stack { display: flex; flex-direction: column; align-items: center; gap: 6px; padding: 1px 0 0 2px; }
.p-block .stack { align-items: flex-start; }
.with-caret { display: flex; align-items: center; gap: 3px; }
.p-util .stack, .p-clip .stack { padding-left: 6px; }
.hot { background: #5a82b4; border: 1px solid #8ab0dc; padding: 0 1px; margin-top: -2px; }
.props { flex: 1; display: flex; flex-direction: column; gap: 2px; margin-right: -2px; }
.prow { display: flex; align-items: center; gap: 1px; height: 15px; }
.combo { flex: 1; display: flex; align-items: center; height: 15px; padding: 0 3px; gap: 2px; border: 1px solid #454545; background: linear-gradient(#5a5a5a, #666); color: #b0b0b0; }
.combo.plain { flex: none; width: 62px; }
.combo.off { color: #7a7a7a; background: #5a5a5a; border-color: #525252; }
.combo select { flex: 1; appearance: none; min-width: 0; opacity: 1; }
.sample { width: 46px; height: 1px; background: #ccc; }
.swatch { width: 12px; height: 12px; margin: 0 6px; background: #a9a9a9; }

.filetabs { height: 21px; padding: 4px 0 0 14px; background: #3a3a3a; border-bottom: 2px solid #5a5a5a; }
.filetabs a { display: block; width: 60px; padding-left: 9px; line-height: 14px; background: #555; color: #aaa; border-radius: 6px 6px 0 0; }

.canvas { position: relative; flex: 1; background: #000; border-right: 6px solid #ccdcee; }
.gridlines { position: absolute; inset: 0; }
.viewlabel { position: absolute; left: 3px; top: 4px; }
.docctl { position: absolute; right: 7px; top: 6px; }
.cube { position: absolute; right: 9px; top: 24px; }
.cube span { position: absolute; color: #aaa; }
.n { left: 27px; top: 2px; }
.s { left: 27px; bottom: 3px; }
.w { left: 0; top: 28px; }
.e { right: 0; top: 28px; }
.wcs { position: absolute; right: 24px; top: 99px; width: 35px; height: 13px; gap: 5px; border-radius: 3px; background: #8d8f99; border: 1px solid #a5a7b0; color: #5c5e66; font: 8px/10px "Liberation Sans", sans-serif; }
.navbar { position: absolute; right: 3px; top: 132px; background: #505050; border-radius: 3px; height: 154px; }
.badge { position: absolute; right: -22px; top: 291px; width: 30px; height: 30px; padding-left: 2px; border-radius: 15px; border: 2px solid #e4f4e4; background: #3bbf53; color: #fff; font-weight: bold; line-height: 26px; }
.ucs { position: absolute; left: 3px; bottom: 6px; }

.cmd { display: flex; height: 40px; border-top: 2px solid #6b6b6b; border-bottom: 1px solid #6b6b6b; }
.grip { width: 17px; display: flex; flex-direction: column; align-items: center; justify-content: space-between; padding: 2px 0 1px; background: #505050; }
.grip i { width: 13px; height: 4px; background: repeating-linear-gradient(90deg, #999 0 1px, #606060 1px 3px); }
.lines { flex: 1; display: flex; flex-direction: column; }
.history { flex: 1; padding: 8px 0 0 1px; background: #c6c6c6; color: #222; }
.entry { display: flex; align-items: center; gap: 1px; height: 16px; padding-left: 3px; background: #c7eacb; border-top: 1px solid #999; }
.entry input { flex: 1; margin-left: 4px; color: #222; }
.entry input::placeholder { color: #8b9a8d; opacity: 1; font-style: italic; }

.status { display: flex; justify-content: space-between; height: 21px; background: #3a3a3a; border-top: 1px solid #555; }
.layouts { display: flex; align-items: flex-start; padding-left: 8px; gap: 3px; }
.layouts button { height: 13px; width: 37px; background: #555; border-radius: 2px 2px 6px 6px; color: #bbb; }
.layouts .on { width: 34px; background: #858585; color: #fff; font-weight: bold; }
.layouts .add { width: 18px; font-weight: bold; }
.toggles { width: 406px; display: flex; align-items: center; gap: 4px; background: #525252; border-left: 2px solid #666; }
.toggles .txt { font-weight: bold; }
.toggles button { height: 16px; min-width: 12px; }
.toggles .lit { width: 16px; background: #5388c2; }
.sep { width: 2px; height: 20px; background: #6c6c6c; }

.palette { position: absolute; left: 37px; top: 37px; width: 474px; height: 255px; display: flex; background: #5c5c5c; border: 1px solid #3c3c3c; border-radius: 3px; box-shadow: 0 0 3px #222; }
.spine { width: 17px; display: flex; flex-direction: column; align-items: center; gap: 6px; padding: 4px 0 2px; background: #505050; border-right: 2px solid #454545; }
.vtext { writing-mode: vertical-rl; text-orientation: sideways; transform: rotate(180deg); color: #bbb; }
.pbody { flex: 1; min-width: 0; display: flex; flex-direction: column; padding: 5px 1px 0 2px; }
.current { display: flex; justify-content: space-between; height: 19px; }
.current span { padding: 4px 0 0 3px; }
.lsearch { display: flex; align-items: center; width: 93px; height: 12px; margin-top: 2px; padding-right: 2px; background: #646464; }
.lsearch input { flex: 1; min-width: 0; }
.lsearch input::placeholder { color: #aaa; opacity: 1; }
.ltools { display: flex; align-items: center; height: 17px; padding-left: 2px; }
.ltools > div { display: flex; align-items: center; gap: 6px; }
.lt-left { width: 88px; }
.lt-left i { width: 1px; height: 12px; background: #888; }
.lt-right { margin-left: auto; padding-right: 7px; }
.cols { display: flex; flex: 1; gap: 3px; min-height: 0; }
.filters { width: 84px; display: flex; flex-direction: column; border: 1px solid #646464; }
.fhead { display: flex; justify-content: space-between; height: 15px; line-height: 14px; padding: 0 4px 0 2px; background: #646464; }
.chev { color: #bbb; font-size: 13px; }
.tree { flex: 1; overflow: hidden; }
.node { display: flex; align-items: center; height: 14px; gap: 3px; padding: 0 0 0 5px; white-space: nowrap; }
.node:first-child { margin-top: 3px; height: 15px; gap: 1px; }
.node b { font-weight: 500; padding: 0 2px; line-height: 14px; background: #f4f4f4; color: #222; }
.node.child { padding-left: 20px; }
.minus { width: 7px; height: 7px; margin-right: 3px; background: #e8e8e8; color: #225; line-height: 6px; text-align: center; }
.sbar { display: flex; align-items: center; height: 13px; padding: 0 4px; gap: 4px; background: #ececec; }
.thumb { display: flex; align-items: center; justify-content: center; height: 11px; border: 1px solid #9c9c9c; border-radius: 2px; background: linear-gradient(#f4f4f4, #c9c9cd); }
.thumb::before { content: ""; width: 5px; height: 5px; background: repeating-linear-gradient(90deg, #555 0 1px, transparent 1px 2px); }
.short .thumb { width: 44px; }
.long .thumb { width: 259px; }
.dlg .thumb { width: 214px; }
.inv { display: flex; align-items: center; gap: 3px; height: 17px; padding: 0 4px 0 2px; }
.inv input { appearance: none; width: 9px; height: 9px; background: #e8e8e8; border: 1px solid #aaa; }
.inv .chev { margin-left: auto; }
.layerlist { flex: 1; min-width: 0; display: flex; flex-direction: column; }
table { border-collapse: collapse; table-layout: fixed; width: 100%; }
th, td { padding: 0; font-weight: 400; text-align: left; white-space: nowrap; overflow: hidden; }
.layerlist th { height: 15px; padding-left: 3px; background: #656565; border-right: 1px solid #555; }
.layerlist th:nth-child(4), .layerlist th:nth-child(5), .layerlist th:nth-child(6) { padding-left: 1px; }
.layerlist td { height: 14px; padding-left: 1px; }
.layerlist td.mid { padding: 0 0 0 4px; }
.layerlist td.lname { padding-left: 2px; }
.layerlist .sel td { background: #929292; color: #111; }
.sort { float: right; margin: 6px 3px 0 0; }
.c12 { width: 12px; } .c13 { width: 13px; } .c14 { width: 14px; } .c19 { width: 19px; } .c34 { width: 34px; } .c39 { width: 39px; } .c47 { width: 47px; } .c50 { width: 50px; } .c55 { width: 55px; }
.cell { display: flex; align-items: center; gap: 4px; }
.white { width: 9px; height: 9px; margin-left: 1px; background: #fff; border: 1px solid #222; }
.dashline { width: 16px; height: 1px; background: #ddd; }
.void { flex: 1; }
.pstatus { height: 27px; padding: 10px 0 0 2px; }

.dialog { position: absolute; left: 455px; top: 128px; width: 320px; padding: 0 5px 5px; border-radius: 5px; border: 1px solid #e4edf6; background: linear-gradient(120deg, #cbdcee, #b4cbe4 50%, #cddef0); color: #222; box-shadow: 0 1px 5px 2px #111; }
.dhead { display: flex; align-items: center; gap: 5px; height: 20px; }
.dhead h2 { flex: 1; margin: 0; font: inherit; }
.dhead button { width: 34px; height: 13px; margin-bottom: 7px; border: 1px solid #6e2a20; border-top: 0; border-radius: 0 0 4px 4px; background: linear-gradient(#e2a092, #c53b24); }
.dbody { padding: 5px 6px 6px 4px; background: #f0f0f0; border: 1px solid #7f8c9c; }
.dbody p { margin: 0 0 4px; }
.list { display: flex; flex-direction: column; height: 121px; background: #c7eacb; border: 1px solid #8fa898; }
.list th { height: 18px; padding-left: 4px; background: linear-gradient(#fff, #f1f1f1); border-right: 1px solid #ddd; }
.list td { height: 15px; padding-left: 1px; }
.list td:nth-child(2) { padding-left: 4px; }
.list td svg { display: block; }
.list .sel { background: #3399ff; color: #fff; }
.l1 { width: 110px; } .l2 { width: 73px; }
.dbtns { display: flex; justify-content: center; gap: 12px; margin-top: 6px; }
.dbtns button { width: 54px; height: 15px; border: 1px solid #858585; border-radius: 2px; background: linear-gradient(#f4f4f4, #d6d6d6); }
.dbtns .def { border-color: #3ba5cf; background: linear-gradient(#eefafe, #c6e6f4); box-shadow: inset 0 0 0 1px #79d0ee; }

.arrow { position: absolute; left: 200px; top: 214px; pointer-events: none; fill: none; }
.mark { position: absolute; right: 120px; bottom: 20px; width: 112px; height: 90px; color: #fff; opacity: .75; font-family: "Liberation Sans", sans-serif; }
.mark svg { position: absolute; right: 9px; top: 0; }
.mark b { position: absolute; left: 0; top: 27px; font-size: 40px; line-height: 36px; }
.mark span { position: absolute; left: 3px; top: 66px; font-size: 19px; line-height: 20px; }
.brand { position: absolute; right: 0; bottom: 0; width: 200px; height: 95px; display: flex; align-items: center; padding-left: 10px; background: #223056; color: #ccc; }
.words { padding-left: 6px; white-space: nowrap; }
.w1 { display: flex; align-items: center; height: 32px; }
.w1 span { width: 43px; font: 35px/32px Roboto, sans-serif; }
.w1 b { font: 500 27px/32px "Noto Sans CJK SC", sans-serif; }
.w2 { font: 25px/24px "Liberation Sans", sans-serif; }
</style>
